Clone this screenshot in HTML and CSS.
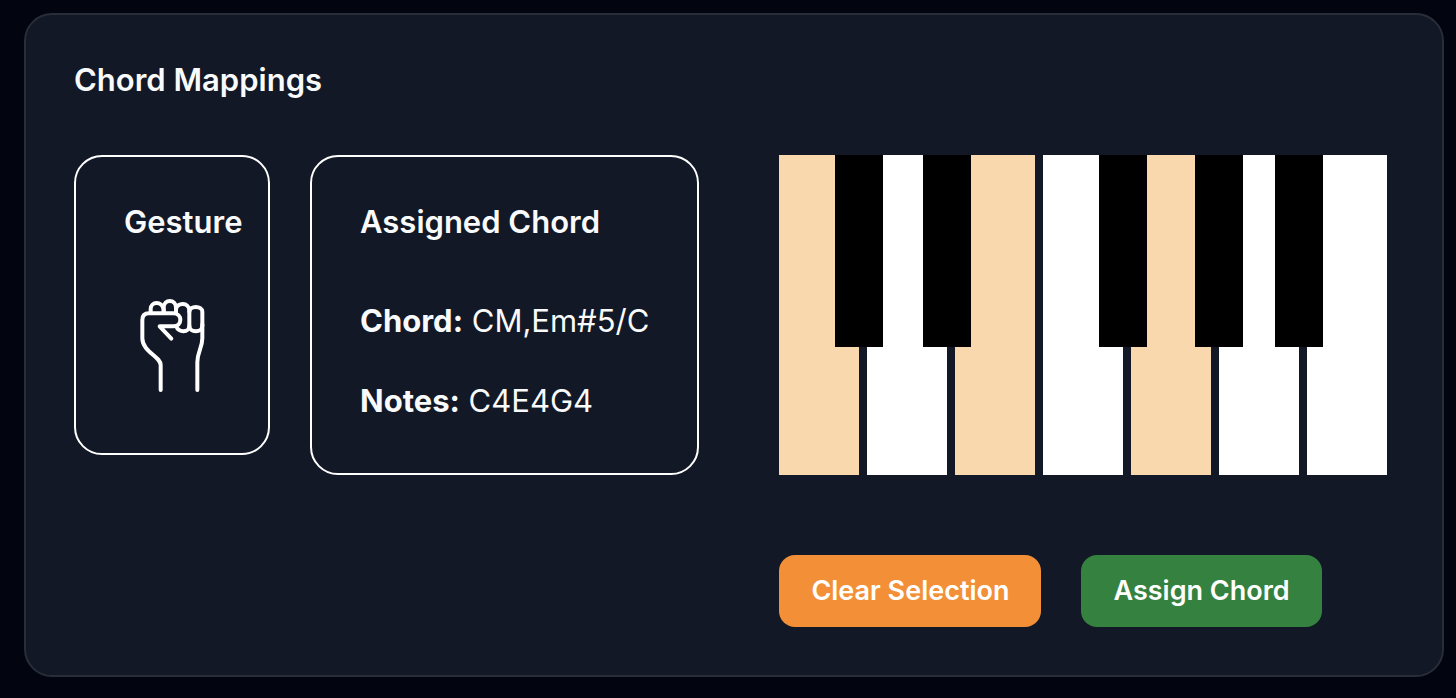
FILE: index.html
```html
<!DOCTYPE html>
<html lang="en">
<head>
<meta charset="utf-8">
<meta name="viewport" content="width=device-width, initial-scale=1">
<title>Chord Mappings</title>
<link rel="stylesheet" href="styles.css">
</head>
<body>
<main class="panel">
  <h1 class="title">Chord Mappings</h1>
  <div class="mapping">
    <section class="card card-gesture">
      <h2 class="title">Gesture</h2>
      <svg class="fist" viewBox="12 36 288 288" role="img" aria-label="Closed fist">
        <path d="M122 315V240C122 214 67 200 67 160V105Q67 85 87 85H160C188 85 188 124 160 124H119L154 161"/>
        <path d="M92 83V72C92 49 126 47 131 73V83"/>
        <path d="M131 83V68C131 41 168 41 168 68V84"/>
        <path d="M168 73C171 51 207 51 208 76V122C208 144 175 144 169 124"/>
        <path d="M208 80C208 61 247 61 247 80V122C247 144 208 144 208 122"/>
        <path d="M247 118V160C247 188 232 201 232 232V315"/>
      </svg>
    </section>
    <section class="card">
      <h2 class="title">Assigned Chord</h2>
      <div class="details">
        <p class="detail"><strong>Chord:</strong> CM,Em#5/C</p>
        <p class="detail"><strong>Notes:</strong> C4E4G4</p>
      </div>
    </section>
    <section class="editor">
      <div class="piano" role="group" aria-label="Piano keys">
        <button class="key selected" type="button" aria-label="C4" aria-pressed="true"></button>
        <button class="key" type="button" aria-label="D4" aria-pressed="false"></button>
        <button class="key selected" type="button" aria-label="E4" aria-pressed="true"></button>
        <button class="key" type="button" aria-label="F4" aria-pressed="false"></button>
        <button class="key selected" type="button" aria-label="G4" aria-pressed="true"></button>
        <button class="key" type="button" aria-label="A4" aria-pressed="false"></button>
        <button class="key" type="button" aria-label="B4" aria-pressed="false"></button>
        <button class="sharp c-sharp" type="button" aria-label="C#4" aria-pressed="false"></button>
        <button class="sharp d-sharp" type="button" aria-label="D#4" aria-pressed="false"></button>
        <button class="sharp f-sharp" type="button" aria-label="F#4" aria-pressed="false"></button>
        <button class="sharp g-sharp" type="button" aria-label="G#4" aria-pressed="false"></button>
        <button class="sharp a-sharp" type="button" aria-label="A#4" aria-pressed="false"></button>
      </div>
      <div class="actions">
        <button class="action clear" type="button">Clear Selection</button>
        <button class="action assign" type="button">Assign Chord</button>
      </div>
    </section>
  </div>
</main>
</body>
</html>
```
FILE: styles.css
```css
* { box-sizing: border-box; }

body {
  margin: 0;
  padding: 13px 12px 21px 24px;
  background: #02040f;
  color: #f9fafb;
  font-family: Inter, "Liberation Sans", sans-serif;
  font-size: 31px;
  line-height: 48px;
}

.panel {
  padding: 48px;
  border: 2px solid #282d39;
  border-radius: 28px;
  background: #121826;
}

.title {
  margin: 0 0 58px;
  font-size: 31px;
  font-weight: 600;
  line-height: 34px;
  white-space: nowrap;
}

.mapping {
  display: flex;
  align-items: flex-start;
  gap: 40px;
}

.card {
  padding: 48px;
  border: 2px solid #fff;
  border-radius: 28px;
}

.card-gesture {
  flex: none;
  width: 196px;
  padding-bottom: 60px;
}

.fist {
  display: block;
  width: 96px;
  height: 96px;
  fill: none;
  stroke: #fff;
  stroke-width: 12;
  stroke-linecap: round;
  stroke-linejoin: round;
}

.details {
  display: grid;
  gap: 32px;
}

.detail {
  margin: 0;
  white-space: nowrap;
}

.editor { margin-left: 40px; }

.piano {
  position: relative;
  display: flex;
  gap: 8px;
}

.key,
.sharp {
  padding: 0;
  border: 0;
  border-radius: 0;
}

.key {
  width: 80px;
  height: 320px;
  background: #fff;
}

.key.selected { background: #f9d8ad; }

.sharp {
  position: absolute;
  top: 0;
  width: 48px;
  height: 192px;
  background: #000;
}

.c-sharp { left: 56px; }
.d-sharp { left: 144px; }
.f-sharp { left: 320px; }
.g-sharp { left: 416px; }
.a-sharp { left: 496px; }

.actions {
  display: flex;
  gap: 40px;
  margin-top: 80px;
}

.action {
  padding: 16px 32px;
  border: 0;
  border-radius: 16px;
  color: #fff;
  font: 600 27px/40px Inter, "Liberation Sans", sans-serif;
  white-space: nowrap;
}

.clear { background: #f39037; }
.assign { background: #35813f; }
```
